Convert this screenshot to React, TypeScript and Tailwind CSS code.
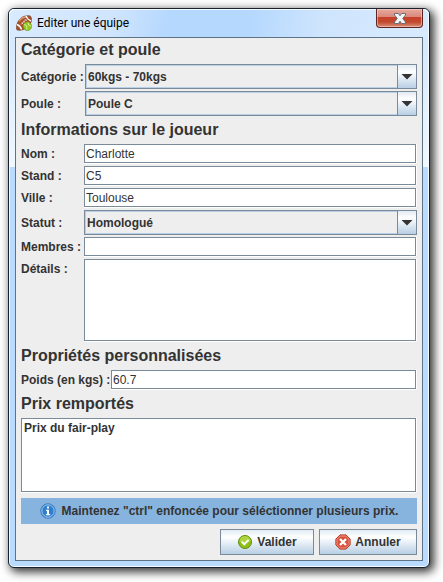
import type { ReactNode } from "react";

function BallsIcon() {
  return (
    <svg width="16" height="16" viewBox="0 0 16 16" aria-hidden="true">
      <path d="M.7 14.3C-.2 8.500 3.500.6 12.500.7c1.300 0 2.200.5 2.600 1.500.8 2.800.2 6.300-2.600 9.100-3.200 3.200-7.300 4.300-11.100 3.800z" fill="#a5522a" stroke="#7a3517" strokeWidth=".7" />
      <path d="M3 6C5 3.200 8 1.900 11 2" fill="none" stroke="#d99a72" strokeWidth="1.600" />
      <path d="M1 9.500q3.200 1.200 4.600 5M10 1q1.300 3.500 5 5" fill="none" stroke="#fff" strokeWidth="1.400" />
      <path d="M5 9.500l5-5M5.500 7.500l2 2M7.200 5.800l2 2M9 4.300l1.800 1.800" fill="none" stroke="#f6e7dc" strokeWidth=".8" />
      <circle cx="11.400" cy="11.300" r="4.200" fill="#93c620" stroke="#6d9c14" strokeWidth=".7" />
      <path d="M8 9.500q3.500.5 2.800 5M12 7.500q-.3 3.200 3.200 3.600" fill="none" stroke="#e4f5a8" strokeWidth=".9" />
    </svg>
  );
}

function InfoIcon() {
  return (
    <svg width="16" height="16" viewBox="0 0 16 16" aria-hidden="true">
      <circle cx="8" cy="8" r="7.300" fill="#2f7fd0" stroke="#3d78b5" strokeWidth=".8" />
      <circle cx="8" cy="8" r="6.200" fill="none" stroke="#a9d0f3" strokeWidth=".9" />
      <path d="M7 3.500h2v2H7zM6 6.700h3v4.300h1.200v1.200H5.900V11H7V7.900H6z" fill="#fff" />
    </svg>
  );
}

function ValidIcon() {
  return (
    <svg width="16" height="16" viewBox="0 0 16 16" aria-hidden="true">
      <circle cx="8" cy="8" r="6.500" fill="#8fbf16" stroke="#5f8c12" strokeWidth="1" />
      <path d="M2.500 7.500a5.500 5.500 0 0 1 11 0q-5 2-11 0z" fill="#add53e" />
      <path d="M4.600 7.600l2.700 2.700 4.300-4.400" fill="none" stroke="#fff" strokeWidth="2" />
    </svg>
  );
}

function CancelIcon() {
  return (
    <svg width="16" height="16" viewBox="0 0 16 16" aria-hidden="true">
      <path d="M5 .9h6L15.100 5v6L11 15.100H5L.9 11V5z" fill="#d8513a" stroke="#b8341f" strokeWidth="1" strokeLinejoin="round" />
      <path d="M5.300 2h5.400L14 5.300v5.400L10.700 14H5.300L2 10.700V5.300z" fill="none" stroke="#ef9d8c" strokeWidth=".9" />
      <path d="M5 5l6 6M11 5l-6 6" stroke="#fff" strokeWidth="2.300" />
    </svg>
  );
}

function Heading({ children }: { children: ReactNode }) {
  return <h2 className="h-6 text-base leading-6 font-bold">{children}</h2>;
}

const box =
  "min-w-0 flex-1 border border-[#7a8a99] bg-white px-px outline-none shadow-[0_1px_0_#fff,1px_0_0_#fff]";

function TextRow({ id, label, value, wide = false }: { id: string; label: string; value: string; wide?: boolean }) {
  return (
    <div className="flex h-5 items-center pr-px pb-px">
      <label
        htmlFor={id}
        className={wide ? "w-[90px] shrink-0 font-bold whitespace-nowrap" : "w-[63px] shrink-0 font-bold whitespace-nowrap"}
      >
        {label}
      </label>
      <input id={id} type="text" defaultValue={value} className={`${box} h-[19px]`} />
    </div>
  );
}

function SelectRow({ id, label, value, wide = false }: { id: string; label: string; value: string; wide?: boolean }) {
  return (
    <div className="flex h-[25px] items-center">
      <label htmlFor={id} className={wide ? "w-16 shrink-0 font-bold" : "w-[63px] shrink-0 font-bold"}>
        {label}
      </label>
      <div className="relative h-full min-w-0 flex-1">
        <select
          id={id}
          className="h-full w-full appearance-none border border-[#7a8a99] bg-[#eee] pr-6 pl-0.5 font-bold outline-none shadow-[inset_1px_1px_0_#b8cfe5,inset_0_-1px_0_#b8cfe5]"
        >
          <option>{value}</option>
        </select>
        <span className="pointer-events-none absolute inset-y-0 right-0 flex w-5 items-center justify-center border border-[#7a8a99] bg-linear-to-b from-[#e2ebf3] via-white via-30% to-[#b8cfe5]">
          <svg width="12" height="6" viewBox="0 0 12 6" aria-hidden="true">
            <path d="M.500 0h11L6 5.600z" fill="#333" />
          </svg>
        </span>
      </div>
    </div>
  );
}

function ActionButton({ icon, width, children }: { icon: ReactNode; width: string; children: ReactNode }) {
  return (
    <button
      type="button"
      className={`${width} flex h-[26px] items-center justify-center gap-1 border border-[#7a8a99] bg-linear-to-b from-[#e2ebf3] via-white via-30% to-[#b8cfe5] font-bold`}
    >
      {icon}
      {children}
    </button>
  );
}

export default function App() {
  return (
    <main className="bg-white pt-2 pr-[13px] pb-[15px] pl-2 font-['Liberation_Sans',Arial,sans-serif] text-xs text-[#333]">
      <section
        aria-labelledby="titre"
        className="rounded-md border border-[#17222e] bg-[#b9dbff] bg-[linear-gradient(to_bottom,#cfe5fd,#f1f8ff)] bg-[length:100%_158px] bg-no-repeat px-1.5 pb-1.5 shadow-[inset_0_0_0_1px_#f4faff,3px_3px_10px_1px_rgba(0,0,0,0.8)]"
      >
        <header className="-mx-1.5 flex h-7 items-center rounded-t-md bg-[linear-gradient(100deg,#d8eafe_0%,#d0e5fd_25%,#b5d8fe_38%,#b5d8fe_57%,#cfe5fd_75%,#d8eafe_100%)] pr-1.5 pl-[7px] shadow-[inset_0_1px_0_#f4faff,inset_1px_0_0_#f4faff,inset_-1px_0_0_#f4faff]">
          <BallsIcon />
          <h1 id="titre" className="pl-[5px] font-[Roboto,'Open_Sans',sans-serif] text-xs text-black">
            Editer une équipe
          </h1>
          <button
            type="button"
            aria-label="Fermer"
            className="ml-auto flex h-[19px] w-[47px] items-center justify-center self-start rounded-b border border-t-0 border-[#5d2721] bg-[linear-gradient(to_bottom,#e6aaa0_0%,#d9877a_45%,#c8402a_46%,#c0492e_72%,#d99078_100%)] shadow-[inset_0_0_0_1px_rgba(255,220,210,0.5)]"
          >
            <svg width="12" height="11" viewBox="0 0 12 11" aria-hidden="true">
              <path d="M.5.500h4L6 2.800 7.500.500h4v1.500L8.700 5.500l2.800 3.500v1.500h-4L6 8.200l-1.500 2.300h-4V9l2.800-3.500L.5 2z" fill="#f5f5f5" stroke="#66707a" strokeWidth="1" />
            </svg>
          </button>
        </header>

        <form className="flex flex-col gap-0.5 border border-[#5f7387] bg-[#eee] px-[5px] pb-[5px]" onSubmit={(e) => e.preventDefault()}>
          <Heading>Catégorie et poule</Heading>
          <SelectRow id="categorie" label="Catégorie :" value="60kgs - 70kgs" wide />
          <SelectRow id="poule" label="Poule :" value="Poule C" wide />

          <Heading>Informations sur le joueur</Heading>
          <TextRow id="nom" label="Nom :" value="Charlotte" />
          <TextRow id="stand" label="Stand :" value="C5" />
          <TextRow id="ville" label="Ville :" value="Toulouse" />
          <SelectRow id="statut" label="Statut :" value="Homologué" />
          <TextRow id="membres" label="Membres :" value="" />
          <div className="flex pr-px pb-px">
            <label htmlFor="details" className="w-[63px] shrink-0 pt-0.5 font-bold">
              Détails :
            </label>
            <textarea id="details" className={`${box} h-[82px] resize-none`} />
          </div>

          <Heading>Propriétés personnalisées</Heading>
          <TextRow id="poids" label="Poids (en kgs) :" value="60.7" wide />

          <Heading>Prix remportés</Heading>
          <div className="flex pr-px pb-px">
            <select multiple aria-label="Prix remportés" className={`${box} h-[74px] overflow-hidden`}>
              <option className="p-0 pt-0.5 pl-px font-bold">Prix du fair-play</option>
            </select>
          </div>

          <p className="mt-[3px] flex h-[26px] items-center justify-center gap-1.5 bg-[#86b4df] font-bold">
            <InfoIcon />
            Maintenez "ctrl" enfoncée pour séléctionner plusieurs prix.
          </p>
          <div className="mt-[3px] flex justify-end gap-[5px]">
            <ActionButton icon={<ValidIcon />} width="w-[94px]">Valider</ActionButton>
            <ActionButton icon={<CancelIcon />} width="w-[98px]">Annuler</ActionButton>
          </div>
        </form>
      </section>
    </main>
  );
}
